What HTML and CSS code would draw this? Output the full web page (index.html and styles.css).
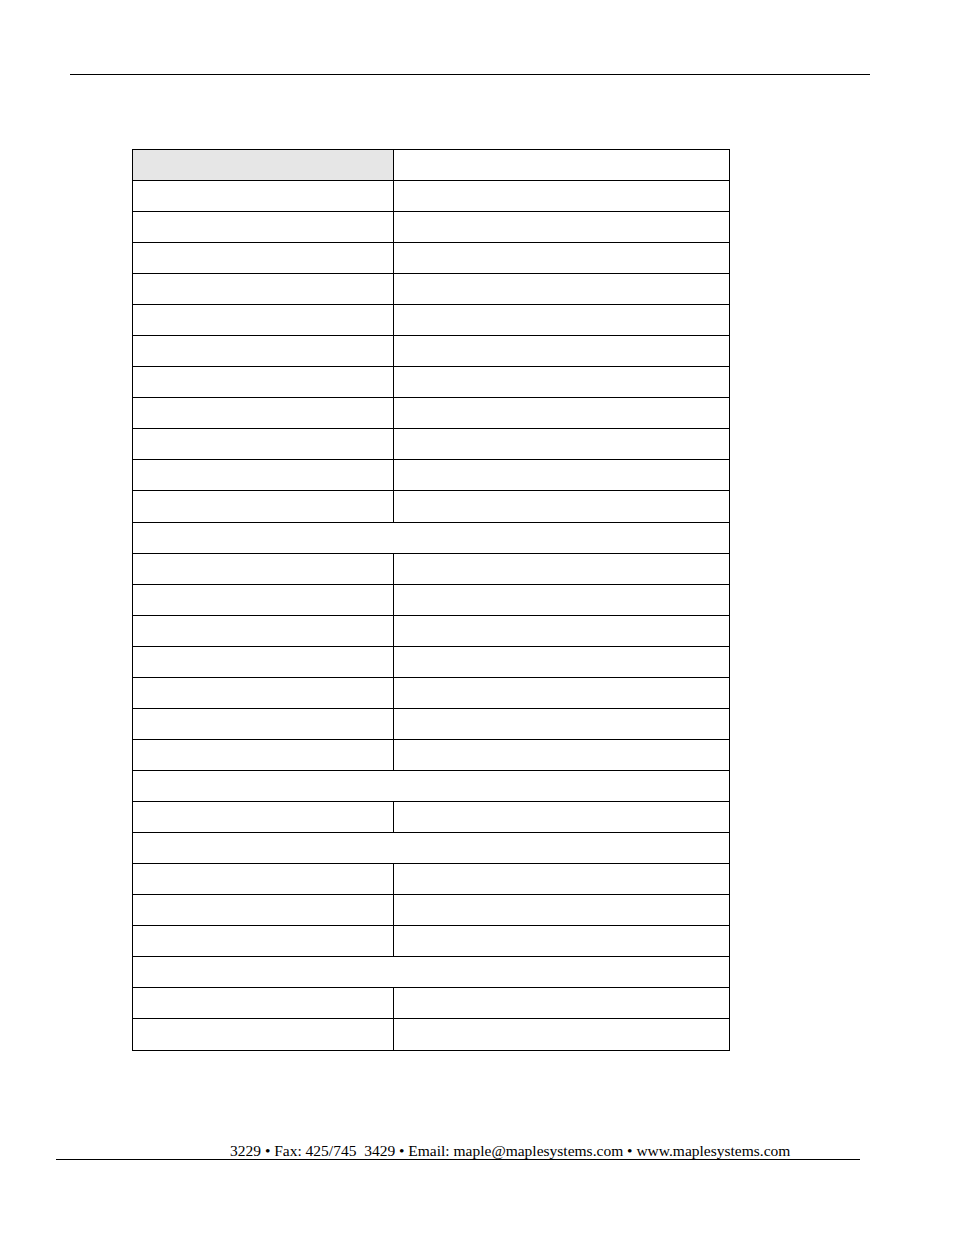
FILE: index.html
```html
<!DOCTYPE html>
<html>
<head>
<meta charset="utf-8">
<link rel="stylesheet" href="styles.css">
</head>
<body>
<div class="page">
  <div class="header-rule"></div>
  <table class="spec">
    <tr><td class="head"></td><td></td></tr>
    <tr><td></td><td></td></tr>
    <tr><td></td><td></td></tr>
    <tr><td></td><td></td></tr>
    <tr><td></td><td></td></tr>
    <tr><td></td><td></td></tr>
    <tr><td></td><td></td></tr>
    <tr><td></td><td></td></tr>
    <tr><td></td><td></td></tr>
    <tr><td></td><td></td></tr>
    <tr><td></td><td></td></tr>
    <tr class="tall"><td></td><td></td></tr>
    <tr><td colspan="2"></td></tr>
    <tr><td></td><td></td></tr>
    <tr><td></td><td></td></tr>
    <tr><td></td><td></td></tr>
    <tr><td></td><td></td></tr>
    <tr><td></td><td></td></tr>
    <tr><td></td><td></td></tr>
    <tr><td></td><td></td></tr>
    <tr><td colspan="2"></td></tr>
    <tr><td></td><td></td></tr>
    <tr><td colspan="2"></td></tr>
    <tr><td></td><td></td></tr>
    <tr><td></td><td></td></tr>
    <tr><td></td><td></td></tr>
    <tr><td colspan="2"></td></tr>
    <tr><td></td><td></td></tr>
    <tr class="tall"><td></td><td></td></tr>
  </table>
  <div class="footer">
    <span class="footer-text">3229 • Fax: 425/745&nbsp; 3429 • Email: maple@maplesystems.com • www.maplesystems.com</span>
  </div>
</div>
</body>
</html>
```
FILE: styles.css
```css
html, body {
  margin: 0;
  padding: 0;
  background: #ffffff;
}
.page {
  width: 954px;
  height: 1235px;
  font-family: "Liberation Serif", "Times New Roman", serif;
  color: #000;
}
.header-rule {
  margin-left: 70px;
  width: 800px;
  height: 74px;
  border-bottom: 1px solid #000;
}
.spec {
  margin-top: 74px;
  margin-left: 132px;
  width: 598px;
  border-collapse: collapse;
  table-layout: fixed;
}
.spec td {
  border: 1px solid #000;
  padding: 0;
  height: 30px;
}
.spec tr.tall td {
  height: 31px;
}
.spec td:first-child {
  width: 260px;
}
.spec td.head {
  background: #e6e6e6;
}
.footer {
  margin-top: 92px;
  margin-left: 56px;
  width: 804px;
  border-bottom: 1px solid #000;
  font-size: 15.5px;
  line-height: 16px;
  padding-left: 174px;
  box-sizing: border-box;
  white-space: nowrap;
}
```
